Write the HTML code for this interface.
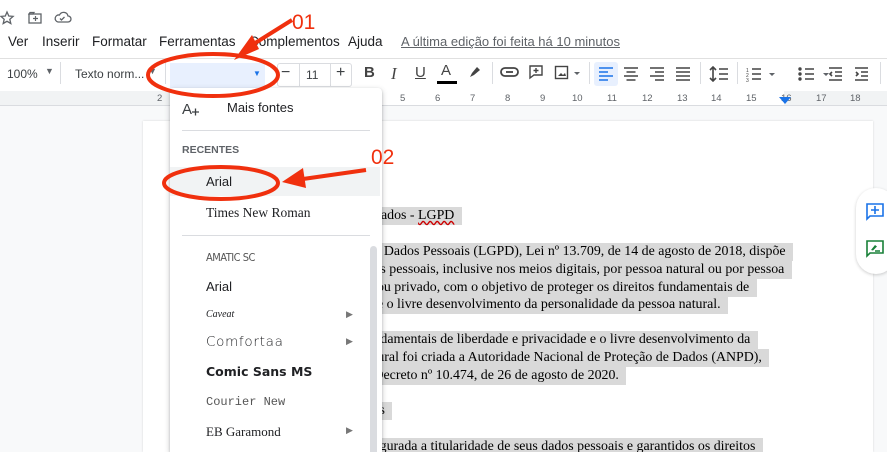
<!DOCTYPE html>
<html style="width:887px;height:452px;overflow:hidden"><head><meta charset="utf-8"><style>
*{margin:0;padding:0;box-sizing:border-box}
body{width:887px;height:452px;overflow:hidden;background:#fff;font-family:"Liberation Sans",Arial,sans-serif;position:relative;color:#3c4043}
.a{position:absolute;white-space:nowrap}
.menu{top:34px;font-size:13.5px;color:#202124}
.tb{top:58px;left:0;width:887px;height:31px;border-top:1px solid #e0e0e0;background:#fff}
.ruler{top:91px;left:0;width:887px;height:15px;background:#f1f3f4;border-bottom:1px solid #dadce0}
.bg{top:106px;left:0;width:887px;height:346px;background:#f8f9fa}
.page{top:121px;left:143px;width:730px;height:331px;background:#fff;box-shadow:0 0 2px rgba(0,0,0,.15)}
.doc{font-family:"Liberation Serif","Times New Roman",serif;font-size:13.9px;color:#000;left:370px}
.doc span{background:#d9d9d9;padding:1px 4px 2px 0}
.dd{top:88px;left:170px;width:212px;height:364px;background:#fff;box-shadow:0 2px 6px rgba(60,64,67,.3),0 1px 2px rgba(60,64,67,.2);border-radius:4px 4px 0 0;overflow:hidden}
.it{position:absolute;left:36px;font-size:13px;color:#202124;white-space:nowrap}
.sep{position:absolute;height:22px;width:1px;background:#dadce0;top:62px}
.rn{position:absolute;top:93px;font-size:9.5px;color:#5f6368}
.ic{position:absolute;top:64px;font-size:15px;color:#444}
</style></head><body>
<svg class="a" style="left:0;top:10px" width="80" height="16" viewBox="0 0 80 16">
<path d="M7 2l1.8 4 4.3.4-3.3 2.9 1 4.2L7 11.3 3.2 13.5l1-4.2L1 6.4l4.3-.4z" fill="none" stroke="#5f6368" stroke-width="1.3"/>
<rect x="29" y="4" width="12" height="9" fill="none" stroke="#5f6368" stroke-width="1.3"/><path d="M29 4h4l1 -1.5h-4z M33 8.5h5 M35.5 6v5" stroke="#5f6368" stroke-width="1.2" fill="none"/>
<path d="M58 12h10a3 3 0 0 0 0-6 4.5 4.5 0 0 0-8.5-1A3.5 3.5 0 0 0 58 12z M60 8.5l1.5 1.5 3-3" fill="none" stroke="#5f6368" stroke-width="1.3"/>
</svg>
<div class="a menu" style="left:8px">Ver</div>
<div class="a menu" style="left:42px">Inserir</div>
<div class="a menu" style="left:92px">Formatar</div>
<div class="a menu" style="left:159px">Ferramentas</div>
<div class="a menu" style="left:249px">Complementos</div>
<div class="a menu" style="left:348px">Ajuda</div>
<div class="a menu" style="left:401px;color:#5f6368;text-decoration:underline;font-size:13px">A última edição foi feita há 10 minutos</div>

<div class="a tb"></div>
<div class="a" style="top:67px;left:7px;font-size:12px;color:#3c4043">100%</div>
<div class="a" style="top:66px;left:45px;font-size:9px;color:#5f6368">▼</div>
<div class="sep" style="left:60px"></div>
<div class="a" style="top:67px;left:75px;font-size:12px;color:#3c4043">Texto norm...</div>
<div class="a" style="top:66px;left:148px;font-size:9px;color:#5f6368">▼</div>
<div class="sep" style="left:165px"></div>
<div class="a" style="top:63px;left:170px;width:95px;height:25px;background:#e8f0fe"></div>
<div class="a" style="top:69px;left:253px;font-size:8px;color:#1a73e8">▼</div>
<div class="a" style="top:63px;left:277px;width:75px;height:24px;border:1px solid #dadce0;border-radius:3px"></div>
<div class="a" style="top:63px;left:299px;width:1px;height:24px;background:#dadce0"></div>
<div class="a" style="top:63px;left:330px;width:1px;height:24px;background:#dadce0"></div>
<div class="a" style="top:64px;left:281px;font-size:16px">−</div>
<div class="a" style="top:68px;left:306px;font-size:12px">11</div>
<div class="a" style="top:64px;left:336px;font-size:16px">+</div>
<div class="ic" style="left:364px;font-weight:bold">B</div>
<div class="ic" style="left:391px;font-style:italic;font-family:'Liberation Serif',serif;font-size:17px">I</div>
<div class="ic" style="left:415px;text-decoration:underline">U</div>
<div class="ic" style="left:441px;top:62px">A</div>
<div class="a" style="top:81px;left:437px;width:20px;height:3px;background:#000"></div>
<svg class="a" style="left:467px;top:64px" width="16" height="16"><path d="M3 13l2-4 5-6 3 3-6 5z" fill="#444"/></svg>
<div class="sep" style="left:492px"></div>
<svg class="a" style="left:500px;top:66px" width="20" height="12"><rect x="1" y="2" width="17" height="8" rx="4" fill="none" stroke="#444" stroke-width="1.8"/><path d="M6 6h7" stroke="#444" stroke-width="1.8"/></svg>
<svg class="a" style="left:528px;top:64px" width="16" height="16"><path d="M2 2h12v9H6l-4 3z" fill="none" stroke="#444" stroke-width="1.4"/><path d="M8 4v5M5.5 6.5h5" stroke="#444" stroke-width="1.4"/></svg>
<svg class="a" style="left:554px;top:65px" width="30" height="16"><rect x="1.5" y="1.5" width="12" height="12" fill="none" stroke="#444" stroke-width="1.4"/><path d="M4 11l3-3 2 2 2-2 1 3z" fill="#444"/><path d="M20 7h6l-3 3z" fill="#5f6368"/></svg>
<div class="sep" style="left:589px"></div>
<div class="a" style="top:62px;left:594px;width:24px;height:24px;background:#e8f0fe;border-radius:3px"></div>
<svg class="a" style="left:598px;top:67px" width="100" height="14">
<g stroke="#1a73e8" stroke-width="1.6"><path d="M1 1h14M1 5h9M1 9h14M1 13h9"/></g>
<g stroke="#444" stroke-width="1.6"><path d="M26 1h14M28.5 5h9M26 9h14M28.5 13h9"/><path d="M52 1h14M57 5h9M52 9h14M57 13h9"/><path d="M78 1h14M78 5h14M78 9h14M78 13h14"/></g>
</svg>
<div class="sep" style="left:700px"></div>
<svg class="a" style="left:709px;top:66px" width="20" height="16"><path d="M4 1v14M1 4l3-3 3 3M1 12l3 3 3-3M10 3h9M10 8h9M10 13h9" stroke="#444" stroke-width="1.6" fill="none"/></svg>
<div class="sep" style="left:737px"></div>
<svg class="a" style="left:745px;top:66px" width="130" height="16">
<g stroke="#444" stroke-width="1.6" fill="none"><path d="M7 3h9M7 8h9M7 13h9"/><path d="M60 3h9M60 8h9M60 13h9"/><circle cx="55" cy="3" r=".9"/><circle cx="55" cy="8" r=".9"/><circle cx="55" cy="13" r=".9"/>
<path d="M84 2h13M90 6h7M90 10h7M84 14h13M87 6l-2 2 2 2"/><path d="M110 2h13M116 6h7M116 10h7M110 14h13M111 6l2 2-2 2"/></g>
<text x="1" y="6" font-size="5" fill="#444">1</text><text x="1" y="11" font-size="5" fill="#444">2</text><text x="1" y="16" font-size="5" fill="#444">3</text>
<path d="M24 7h6l-3 3zM78 7h6l-3 3z" fill="#5f6368"/>
</svg>
<div class="sep" style="left:880px"></div>

<div class="a ruler"></div>
<div class="a" style="top:91px;left:172px;width:612px;height:14px;background:#fff"></div>
<div class="rn" style="left:157px">2</div>
<div class="rn" style="left:400px">5</div><div class="rn" style="left:435px">6</div><div class="rn" style="left:470px">7</div><div class="rn" style="left:505px">8</div><div class="rn" style="left:540px">9</div><div class="rn" style="left:572px">10</div><div class="rn" style="left:607px">11</div><div class="rn" style="left:642px">12</div><div class="rn" style="left:677px">13</div><div class="rn" style="left:711px">14</div><div class="rn" style="left:746px">15</div><div class="rn" style="left:781px">16</div><div class="rn" style="left:816px">17</div><div class="rn" style="left:850px">18</div>
<svg class="a" style="left:779px;top:97px" width="12" height="8"><path d="M0 0h12L6 7z" fill="#1a73e8"/></svg>

<div class="a bg"></div>
<div class="a page"></div>

<div class="a doc" style="top:208px;left:381px"><span>ados - <u style="text-decoration-color:#c00;text-decoration-style:wavy">LGPD</u>&nbsp;</span></div>
<div class="a doc" style="top:244px"><span>&nbsp;&nbsp;&nbsp;&nbsp;Dados Pessoais (LGPD), Lei nº 13.709, de 14 de agosto de 2018, dispõe&nbsp;</span></div>
<div class="a doc" style="top:262px"><span>&nbsp;&nbsp;&nbsp;s pessoais, inclusive nos meios digitais, por pessoa natural ou por pessoa&nbsp;</span></div>
<div class="a doc" style="top:280px"><span>&nbsp;&nbsp;ou privado, com o objetivo de proteger os direitos fundamentais de&nbsp;</span></div>
<div class="a doc" style="top:297px"><span>&nbsp;&nbsp;e o livre desenvolvimento da personalidade da pessoa natural.&nbsp;</span></div>
<div class="a doc" style="top:332px"><span>&nbsp;ndamentais de liberdade e privacidade e o livre desenvolvimento da&nbsp;</span></div>
<div class="a doc" style="top:350px"><span>&nbsp;tural foi criada a Autoridade Nacional de Proteção de Dados (ANPD),&nbsp;</span></div>
<div class="a doc" style="top:368px"><span>&nbsp;Decreto nº 10.474, de 26 de agosto de 2020.&nbsp;</span></div>
<div class="a doc" style="top:403px;left:376px"><span>&nbsp;s&nbsp;</span></div>
<div class="a doc" style="top:439px"><span>&nbsp;egurada a titularidade de seus dados pessoais e garantidos os direitos&nbsp;</span></div>

<div class="a" style="top:188px;left:856px;width:40px;height:86px;background:#fff;border-radius:20px;box-shadow:0 1px 3px rgba(0,0,0,.2)"></div>
<svg class="a" style="left:866px;top:203px" width="18" height="18"><path d="M1 1h16v12H4l-3 3z" fill="none" stroke="#1a73e8" stroke-width="1.6"/><path d="M9 3v8M5 7h8" stroke="#1a73e8" stroke-width="1.6"/></svg>
<svg class="a" style="left:866px;top:240px" width="18" height="18"><path d="M1 1h16v12H4l-3 3z" fill="none" stroke="#188038" stroke-width="1.6"/><path d="M5 10l4-5 2 1.5-4 4z" fill="#188038"/><path d="M9 11h5" stroke="#188038" stroke-width="1.5"/></svg>

<div class="a dd">
<svg style="position:absolute;left:12px;top:13px" width="18" height="16"><text x="0" y="13" font-size="15" fill="#3c4043" font-family="Liberation Sans">A</text><path d="M10 11h7M13.5 7.5v7" stroke="#3c4043" stroke-width="1.3"/></svg>
<div class="it" style="top:12px;left:57px">Mais fontes</div>
<div style="position:absolute;top:42px;left:12px;width:188px;height:1px;background:#dadce0"></div>
<div class="it" style="top:56px;left:12px;font-size:10.5px;font-weight:bold;color:#5f6368">RECENTES</div>
<div style="position:absolute;top:79px;left:0;width:210px;height:29px;background:#f1f3f4"></div>
<div class="it" style="top:86px">Arial</div>
<div class="it" style="top:117px;font-family:'Liberation Serif',serif;font-size:13.5px">Times New Roman</div>
<div style="position:absolute;top:147px;left:12px;width:188px;height:1px;background:#dadce0"></div>
<div class="it" style="top:163px;font-size:11px;color:#555;letter-spacing:-.5px;font-family:'DejaVu Sans Condensed',sans-serif">AMATIC SC</div>
<div class="it" style="top:191px">Arial</div>
<div class="it" style="top:221px;font-size:10px;font-style:italic;font-family:'Liberation Serif',serif">Caveat</div>
<div class="it" style="top:246px;font-size:13.5px;letter-spacing:.7px;font-family:'DejaVu Sans',sans-serif;font-weight:300">Comfortaa</div>
<div class="it" style="top:276px;font-weight:bold;font-size:12.5px;font-family:'DejaVu Sans',sans-serif">Comic Sans MS</div>
<div class="it" style="top:307px;font-family:'Liberation Mono',monospace;font-size:12px;color:#555">Courier New</div>
<div class="it" style="top:336px;font-family:'Liberation Serif',serif;font-size:13px">EB Garamond</div>
<div class="it" style="top:221px;left:176px;font-size:9px;color:#777">▶</div>
<div class="it" style="top:248px;left:176px;font-size:9px;color:#777">▶</div>
<div class="it" style="top:337px;left:176px;font-size:9px;color:#777">▶</div>
<div style="position:absolute;top:158px;left:200px;width:7px;height:220px;background:#dadce0;border-radius:4px"></div>
</div>

<svg class="a" style="left:0;top:0" width="887" height="452">
<g fill="none" stroke="#f0300e" stroke-width="4">
<ellipse cx="213" cy="75" rx="65" ry="21"/>
<ellipse cx="221" cy="183" rx="57" ry="16"/>
<path d="M292 20L244 50"/>
<path d="M366 170L296 180"/>
</g>
<path d="M234 60L252 35 L259 49z" fill="#f0300e"/>
<path d="M282 182L303 168 L306 188z" fill="#f0300e"/>
<text x="292" y="29" font-size="21" fill="#f0300e" font-family="Liberation Sans">01</text>
<text x="371" y="164" font-size="21" fill="#f0300e" font-family="Liberation Sans">02</text>
</svg>
</body></html>
